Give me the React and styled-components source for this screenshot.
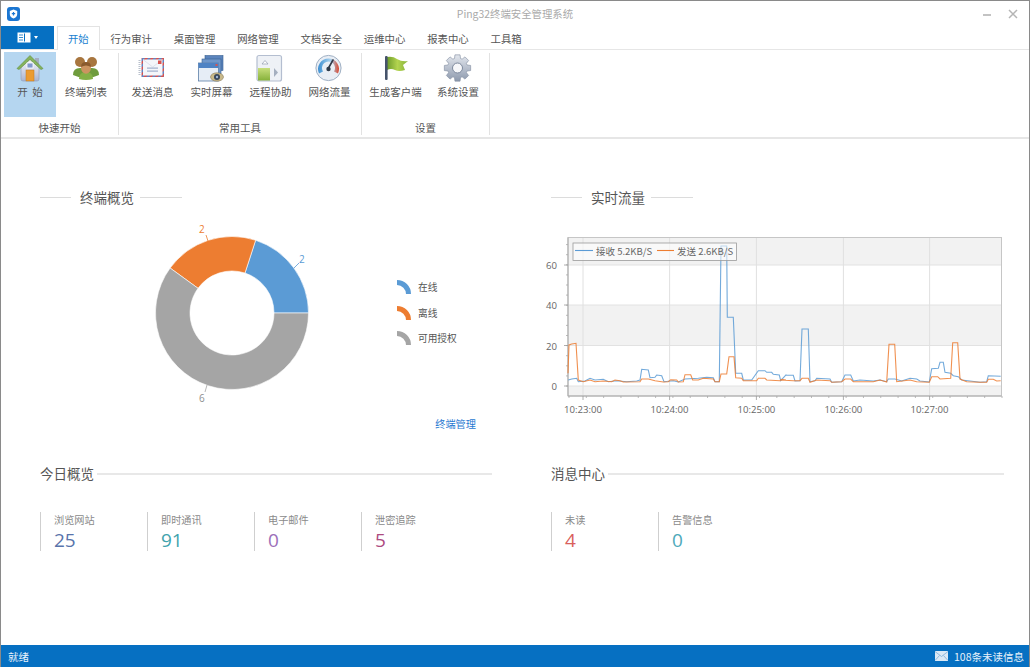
import styled, { createGlobalStyle } from 'styled-components';

const GlobalStyle = createGlobalStyle`
    html, body {
        margin: 0;
        padding: 0;
        background: #fff;
    }
    * {
        box-sizing: border-box;
    }
`

const TABS = ['开始', '行为审计', '桌面管理', '网络管理', '文档安全', '运维中心', '报表中心', '工具箱']

const HomeIcon = () => (
    <svg width="30" height="30" viewBox="0 0 30 30">
        <defs>
            <linearGradient id="wall" x1="0" y1="0" x2="0" y2="1">
                <stop offset="0" stopColor="#f7f8fc" />
                <stop offset="1" stopColor="#a9b4d2" />
            </linearGradient>
        </defs>
        <rect x="20" y="4" width="4" height="8" fill="#a3aec2" />
        <path d="M6 13 L15 5 L24 13 V25 Q24 27 22 27 H8 Q6 27 6 25 Z" fill="url(#wall)" stroke="#8d9cb8" strokeWidth=".6" />
        <path d="M2 14.5 L15 1.5 L28 14.5 L26 15.5 L15 5.5 L4 15.5 Z" fill="#86b35c" stroke="#5d8c3a" strokeWidth=".6" />
        <rect x="12" y="9" width="6" height="5" fill="#8299cd" stroke="#fff" strokeWidth=".8" />
        <rect x="11" y="16" width="8" height="11" fill="#eb9b32" stroke="#c47a1c" strokeWidth=".5" />
    </svg>
)

const UsersIcon = () => (
    <svg width="30" height="30" viewBox="0 0 30 30">
        <circle cx="9" cy="8" r="5" fill="#a8763f" />
        <circle cx="21" cy="8" r="5" fill="#a8763f" />
        <path d="M2 21 Q2 14 9 14 H21 Q28 14 28 21 Q22 24 15 24 Q8 24 2 21 Z" fill="#6f9c3d" />
        <path d="M8 25 Q8 18 15 18 Q22 18 22 25 Q15 27 8 25 Z" fill="#84b045" />
        <ellipse cx="15" cy="14" rx="5" ry="5.8" fill="#cc9460" />
        <path d="M10 13 Q10 8 15 8 Q20 8 20 13 Q15 10 10 13 Z" fill="#8a5a2d" />
    </svg>
)

const MailIcon = () => (
    <svg width="30" height="30" viewBox="0 0 30 30">
        <defs>
            <pattern id="airmail" width="4" height="4" patternUnits="userSpaceOnUse" patternTransform="rotate(45)">
                <rect width="2" height="4" fill="#d9534f" />
                <rect x="2" width="2" height="4" fill="#5d86c7" />
            </pattern>
        </defs>
        <rect x="3.5" y="4" width="22.5" height="19" fill="url(#airmail)" />
        <rect x="5" y="5.5" width="19.5" height="16" fill="#f4f6fa" />
        <path d="M5 5.5 L14.7 13 L24.5 5.5" fill="none" stroke="#d6dce8" strokeWidth=".8" />
        <rect x="20" y="6.5" width="3.5" height="3.5" fill="#d9534f" />
        <rect x="9" y="13.5" width="11" height="1.2" fill="#9fb0cc" />
        <rect x="9" y="16.5" width="11" height="1.2" fill="#9fb0cc" />
        <path d="M1.5 6 V22" stroke="#b8c0cc" strokeWidth="2" strokeDasharray="1 1" />
    </svg>
)

const ScreenIcon = () => (
    <svg width="30" height="30" viewBox="0 0 30 30">
        <rect x="8" y="1.5" width="18" height="15" fill="#5b84bd" stroke="#37608f" strokeWidth=".6" />
        <rect x="5" y="5" width="19" height="15" fill="#6f97cb" stroke="#37608f" strokeWidth=".6" />
        <rect x="1.5" y="9" width="20" height="18" fill="#e6edf6" stroke="#5d7fa8" strokeWidth=".8" />
        <rect x="1.5" y="9" width="20" height="5" fill="#4f83c4" />
        <rect x="18.5" y="10" width="2" height="2" fill="#d9534f" />
        <ellipse cx="20" cy="23" rx="6.5" ry="4.2" fill="#c9b98a" stroke="#76694a" strokeWidth=".5" />
        <circle cx="20" cy="23" r="3" fill="#38465c" />
        <circle cx="20" cy="23" r="1.2" fill="#9fb6d6" />
    </svg>
)

const RemoteIcon = () => (
    <svg width="30" height="30" viewBox="0 0 30 30">
        <defs>
            <linearGradient id="green" x1="0" y1="0" x2="0" y2="1">
                <stop offset="0" stopColor="#c7de7c" />
                <stop offset="1" stopColor="#86b13a" />
            </linearGradient>
        </defs>
        <rect x="1" y="1.5" width="24.5" height="25.5" rx="2" fill="#eef1f6" stroke="#b4bed0" strokeWidth="1.2" />
        <rect x="2" y="14" width="12" height="12.5" fill="url(#green)" />
        <path d="M6 10 L9 6.5 L12 10 Z" fill="#fff" stroke="#8f9bb0" strokeWidth=".7" />
        <path d="M18 14 L22 18.5 L18 23 Z" fill="#a5afbf" />
    </svg>
)

const GaugeIcon = () => (
    <svg width="30" height="30" viewBox="0 0 30 30">
        <defs>
            <linearGradient id="dial" x1="0" y1="0" x2="1" y2="0">
                <stop offset="0" stopColor="#3d8fd1" />
                <stop offset=".6" stopColor="#a9d2ee" />
                <stop offset="1" stopColor="#d9482f" />
            </linearGradient>
        </defs>
        <circle cx="13.5" cy="14" r="12.6" fill="#e9eef5" stroke="#9fb0c4" strokeWidth="1" />
        <path d="M4 19.5 A10.5 10.5 0 1 1 23 19.5 L19 17.5 A6.5 6.5 0 1 0 8 17.5 Z" fill="url(#dial)" />
        <path d="M13.5 14 L18 6" stroke="#2f3a48" strokeWidth="1.6" strokeLinecap="round" />
        <circle cx="13.5" cy="15" r="2.2" fill="#2f3a48" />
    </svg>
)

const FlagIcon = () => (
    <svg width="30" height="30" viewBox="0 0 30 30">
        <defs>
            <linearGradient id="flag" x1="0" y1="0" x2="1" y2="0">
                <stop offset="0" stopColor="#6e9c2c" />
                <stop offset=".5" stopColor="#b3d44f" />
                <stop offset="1" stopColor="#86b23a" />
            </linearGradient>
        </defs>
        <path d="M6 3 Q12 2 16 5 Q21 8 27 7 L22 11 L24 16 Q18 18 14 16 Q10 14 6 16 Z" fill="url(#flag)" />
        <rect x="4" y="2" width="2.6" height="24" rx="1" fill="#46536b" />
    </svg>
)

const toRad = (deg) => (deg * Math.PI) / 180

// eight teeth round the centre, outer and root radius alternate
const gearPath = (cx, cy, outer, root) => {
    const points = []
    for (let i = 0; i < 8; i++) {
        const a = i * 45
        const steps = [[root, a - 22.5 + 5], [outer, a - 11], [outer, a + 11], [root, a + 22.5 - 5]]
        steps.forEach(([r, deg]) => {
            points.push(`${(cx + r * Math.cos(toRad(deg))).toFixed(2)} ${(cy + r * Math.sin(toRad(deg))).toFixed(2)}`)
        })
    }
    return `M${points.join(' L')} Z`
}

const GearIcon = () => (
    <svg width="30" height="30" viewBox="0 0 30 30">
        <defs>
            <linearGradient id="steel" x1="0" y1="0" x2="0" y2="1">
                <stop offset="0" stopColor="#e3e7ee" />
                <stop offset="1" stopColor="#8d99ad" />
            </linearGradient>
        </defs>
        <path d={gearPath(14.5, 14, 13.4, 10)} fill="url(#steel)" stroke="#7d899d" strokeWidth=".6" />
        <circle cx="14.5" cy="14" r="5" fill="#f6f7fa" stroke="#7d899d" strokeWidth="1" />
    </svg>
)

const GROUPS = [
    {
        title: '快速开始',
        tools: [
            { label: '开  始', icon: <HomeIcon />, active: true, width: 52 },
            { label: '终端列表', icon: <UsersIcon />, width: 60 },
        ],
        width: 118,
        pad: 3,
    },
    {
        title: '常用工具',
        tools: [
            { label: '发送消息', icon: <MailIcon />, width: 59 },
            { label: '实时屏幕', icon: <ScreenIcon />, width: 59 },
            { label: '远程协助', icon: <RemoteIcon />, width: 59 },
            { label: '网络流量', icon: <GaugeIcon />, width: 59 },
        ],
        width: 243,
        pad: 4,
    },
    {
        title: '设置',
        tools: [
            { label: '生成客户端', icon: <FlagIcon />, width: 67 },
            { label: '系统设置', icon: <GearIcon />, width: 58 },
        ],
        width: 128,
        pad: 0,
    },
]

// donut slice, angles counted counter-clockwise from east
const slice = (cx, cy, r1, r2, from, to) => {
    const pt = (r, a) => `${(cx + r * Math.cos(toRad(a))).toFixed(2)} ${(cy - r * Math.sin(toRad(a))).toFixed(2)}`
    const large = to - from > 180 ? 1 : 0
    return `M${pt(r2, from)} A${r2} ${r2} 0 ${large} 0 ${pt(r2, to)} L${pt(r1, to)} A${r1} ${r1} 0 ${large} 1 ${pt(r1, from)} Z`
}

const Donut = () => (
    <svg width="200" height="185" viewBox="0 0 200 185" style={{ flex: 'none' }}>
        <path d={slice(92, 93, 42, 76.5, 0, 72)} fill="#5b9bd5" stroke="#fff" strokeWidth=".6" />
        <path d={slice(92, 93, 42, 76.5, 72, 144)} fill="#ed7d31" stroke="#fff" strokeWidth=".6" />
        <path d={slice(92, 93, 42, 76.5, 144, 360)} fill="#a5a5a5" stroke="#fff" strokeWidth=".6" />
        <path d="M154 48 L159 43" stroke="#5b9bd5" strokeWidth=".8" />
        <path d="M68 21 L66 15" stroke="#ed7d31" strokeWidth=".8" />
        <path d="M67 165 L65 172" stroke="#a5a5a5" strokeWidth=".8" />
        <DonutText x="159" y="43" fill="#5b9bd5">2</DonutText>
        <DonutText x="59" y="13" fill="#ed7d31">2</DonutText>
        <DonutText x="59" y="182" fill="#8f8f8f">6</DonutText>
    </svg>
)

const RECEIVE_A = [[85,450],[95,447],[110,445],[115,455],[135,453],[150,445],[165,450],[190,448],[205,455],[230,452],[260,455],[290,453],[300,450],[305,418],[325,420],[330,443],[345,442],[350,435],[365,437],[372,455],[400,452],[415,456],[435,447],[475,445],[500,442],[520,443],[525,455],[538,455],[543,48],[560,48],[562,262],[580,262],[587,430],[605,430],[610,450],[635,450],[655,422],[675,422],[680,427],[695,427],[700,433],[718,435],[722,452],[738,435]]
const RECEIVE_B = [[20,436],[40,436],[45,453],[60,452],[66,297],[85,297],[90,455],[105,452],[110,445],[150,447],[155,457],[185,455],[195,435],[212,435],[220,453],[240,450],[280,453],[300,450],[320,455],[325,447],[345,447],[365,453],[390,445],[410,447],[420,453],[448,456],[455,416],[475,415],[480,397],[490,397],[495,427],[512,430],[520,437],[535,440],[545,450],[570,453],[600,457],[620,455],[625,437],[662,439]]
const SEND_A = [[84,430],[87,345],[95,342],[108,340],[115,450],[130,455],[150,450],[165,455],[190,453],[215,455],[225,450],[240,452],[250,456],[300,455],[305,447],[325,447],[345,452],[370,456],[385,455],[392,449],[410,450],[415,456],[430,455],[435,434],[452,434],[458,450],[475,450],[490,445],[520,447],[525,455],[538,455],[543,432],[560,432],[567,380],[582,380],[587,443],[605,445],[610,452],[650,452],[655,445],[675,445],[680,450],[720,452],[725,448],[738,450]]
const SEND_B = [[0,450],[40,452],[60,452],[66,445],[85,445],[90,457],[110,450],[150,452],[155,457],[185,455],[195,447],[212,447],[220,455],[280,455],[300,450],[320,456],[327,343],[344,343],[350,455],[390,450],[410,455],[448,457],[455,440],[473,440],[480,447],[512,445],[518,338],[533,338],[540,447],[560,455],[600,457],[620,457],[625,448],[640,448],[650,453],[662,452]]

// points were read off two crops, bring them back to chart units
const toPoints = (a, b) =>
    [...a.map(([x, y]) => [x / 3, y / 3]), ...b.map(([x, y]) => [240 + x / 3, y / 3])]
        .map(([x, y]) => `${x.toFixed(1)},${y.toFixed(1)}`)
        .join(' ')

const TIMES = [[43, '10:23:00'], [129.6, '10:24:00'], [216.4, '10:25:00'], [303.4, '10:26:00'], [389.6, '10:27:00']]
const LEVELS = [[156, '0'], [115.5, '20'], [75, '40'], [35, '60']]
const BANDS = [[7.5, 27.5], [75, 40.5], [156, 10]]
const minorX = Array.from({ length: 26 }, (_, i) => 29 + i * 17.32)
const minorY = Array.from({ length: 15 }, (_, i) => 156 - i * 10.1)

const TrafficChart = () => (
    <svg width="470" height="190" viewBox="0 0 470 190" style={{ display: 'block', marginLeft: -11 }}>
        {BANDS.map(([y, h]) => <rect key={y} x="28" y={y} width="433.5" height={h} fill="#f2f2f2" />)}
        {LEVELS.map(([y]) => <path key={y} d={`M28 ${y} H461.5`} stroke="#e2e2e2" strokeWidth="1" />)}
        {TIMES.map(([x]) => <path key={x} d={`M${x} 7.5 V166`} stroke="#e0e0e0" strokeWidth="1" />)}
        <rect x="28" y="7.5" width="433.5" height="158.5" fill="none" stroke="#c6c6c6" strokeWidth="1" />
        <path d="M28 7.5 V166 H461.5" fill="none" stroke="#ababab" strokeWidth="1" />
        {minorX.map((x) => <path key={x} d={`M${x} 166 v2`} stroke="#aaa" strokeWidth=".8" />)}
        {TIMES.map(([x]) => <path key={x} d={`M${x} 166 v4`} stroke="#999" strokeWidth=".8" />)}
        {minorY.map((y) => <path key={y} d={`M28 ${y} h-2`} stroke="#aaa" strokeWidth=".8" />)}
        {LEVELS.map(([y]) => <path key={y} d={`M28 ${y} h-4`} stroke="#999" strokeWidth=".8" />)}
        {LEVELS.map(([y, text]) => <AxisText key={y} x="17" y={y + 4} textAnchor="end">{text}</AxisText>)}
        {TIMES.map(([x, text]) => <AxisText key={x} x={x} y="183" textAnchor="middle">{text}</AxisText>)}
        <polyline points={toPoints(RECEIVE_A, RECEIVE_B)} fill="none" stroke="#5b9bd5" strokeWidth="1.1" strokeOpacity=".85" />
        <polyline points={toPoints(SEND_A, SEND_B)} fill="none" stroke="#ed7d31" strokeWidth="1.1" strokeOpacity=".85" />
        <rect x="33" y="13" width="163.5" height="17.5" fill="#fff" fillOpacity=".55" stroke="#9b9b9b" strokeWidth=".8" />
        <path d="M35 20.5 H53" stroke="#5b9bd5" strokeWidth="1.1" />
        <ChartLegend x="56" y="24.5">接收 5.2KB/S</ChartLegend>
        <path d="M117 20.5 H134" stroke="#ed7d31" strokeWidth="1.1" />
        <ChartLegend x="137" y="24.5">发送 2.6KB/S</ChartLegend>
    </svg>
)

const LegendArc = ({ color }) => (
    <svg width="14" height="14" viewBox="0 0 14 14">
        <path d="M0 0 A14 14 0 0 1 14 14 L9 14 A9 9 0 0 0 0 5 Z" fill={color} />
    </svg>
)

const App = () => (
    <Frame>
        <GlobalStyle />
        <TitleBar>
            <Logo>
                <svg width="13" height="14" viewBox="0 0 13 14">
                    <rect width="13" height="14" rx="3" fill="#1b76d2" />
                    <path d="M6.5 2.6 L10.2 3.9 V7 Q10.2 10 6.5 11.6 Q2.8 10 2.8 7 V3.9 Z" fill="#fff" />
                    <path d="M6.5 5 V8.4 M4.8 6.7 H8.2" stroke="#1b76d2" strokeWidth="1.2" />
                </svg>
            </Logo>
            <WindowTitle>Ping32终端安全管理系统</WindowTitle>
            <WindowControls>
                <svg width="10" height="10" viewBox="0 0 10 10"><path d="M1 6 H9" stroke="#b5b5b5" strokeWidth="1.6" /></svg>
                <svg width="10" height="10" viewBox="0 0 10 10"><path d="M1 1 L9 9 M9 1 L1 9" stroke="#b5b5b5" strokeWidth="1.5" /></svg>
            </WindowControls>
        </TitleBar>

        <TabBar>
            <FileButton>
                <svg width="14" height="11" viewBox="0 0 14 11">
                    <rect x=".5" y=".5" width="13" height="10" fill="#fff" />
                    <rect x="7" y="1.5" width="1" height="8" fill="#0670c2" />
                    <path d="M2 3 H6 M2 5.5 H6 M2 8 H6" stroke="#0670c2" strokeWidth=".8" />
                </svg>
                <Caret />
            </FileButton>
            {TABS.map((tab, i) => <Tab key={tab} $active={i === 0}>{tab}</Tab>)}
        </TabBar>

        <Ribbon>
            {GROUPS.map((group) => (
                <Group key={group.title} $width={group.width}>
                    <Tools $pad={group.pad}>
                        {group.tools.map((tool) => (
                            <Tool key={tool.label} $active={tool.active} $width={tool.width}>
                                {tool.icon}
                                <ToolLabel>{tool.label}</ToolLabel>
                            </Tool>
                        ))}
                    </Tools>
                    <GroupTitle>{group.title}</GroupTitle>
                </Group>
            ))}
        </Ribbon>

        <Content>
            <section>
                <Heading>
                    <HeadingRule $width={31} />
                    <HeadingText>终端概览</HeadingText>
                    <HeadingRule $width={42} />
                </Heading>
                <DonutRow>
                    <Donut />
                    <Legend>
                        <LegendRow><LegendArc color="#5b9bd5" />在线</LegendRow>
                        <LegendRow><LegendArc color="#ed7d31" />离线</LegendRow>
                        <LegendRow><LegendArc color="#a5a5a5" />可用授权</LegendRow>
                    </Legend>
                </DonutRow>
                <ManageLink>终端管理</ManageLink>
            </section>

            <section>
                <Heading>
                    <HeadingRule $width={31} />
                    <HeadingText>实时流量</HeadingText>
                    <HeadingRule $width={42} />
                </Heading>
                <ChartWrap>
                    <TrafficChart />
                </ChartWrap>
            </section>

            <section>
                <Heading>
                    <PlainText>今日概览</PlainText>
                    <HeadingRule $grow />
                </Heading>
                <Stats>
                    <Stat><StatLabel>浏览网站</StatLabel><StatValue $color="#5873ab">25</StatValue></Stat>
                    <Stat><StatLabel>即时通讯</StatLabel><StatValue $color="#3fa3ad">91</StatValue></Stat>
                    <Stat><StatLabel>电子邮件</StatLabel><StatValue $color="#9c6fb9">0</StatValue></Stat>
                    <Stat><StatLabel>泄密追踪</StatLabel><StatValue $color="#ad4a7f">5</StatValue></Stat>
                </Stats>
            </section>

            <section>
                <Heading>
                    <PlainText>消息中心</PlainText>
                    <HeadingRule $grow />
                </Heading>
                <Stats>
                    <Stat><StatLabel>未读</StatLabel><StatValue $color="#d9605c">4</StatValue></Stat>
                    <Stat><StatLabel>告警信息</StatLabel><StatValue $color="#4ea9ba">0</StatValue></Stat>
                </Stats>
            </section>
        </Content>

        <StatusBar>
            <span>就绪</span>
            <StatusInfo>
                <svg width="13" height="10" viewBox="0 0 13 10">
                    <rect width="13" height="10" fill="#dce9f5" />
                    <path d="M0 .5 L6.5 5.5 L13 .5 M0 9.5 L4.5 4.5 M13 9.5 L8.5 4.5" fill="none" stroke="#7eaed8" strokeWidth=".8" />
                </svg>
                108条未读信息
            </StatusInfo>
        </StatusBar>
    </Frame>
)

const Frame = styled.div`
    width: 1030px;
    height: 667px;
    display: flex;
    flex-direction: column;
    border: 1px solid #8a8a8a;
    border-bottom: 0;
    background: #fff;
    font-family: "Noto Sans CJK SC", "Noto Sans", sans-serif;
    color: #555;
    overflow: hidden;
`
const TitleBar = styled.header`
    height: 25px;
    flex: none;
    display: flex;
    align-items: center;
    justify-content: space-between;
    padding: 0 11px 0 6px;
    position: relative;
`
const Logo = styled.div`
    display: flex;
`
const WindowTitle = styled.div`
    position: absolute;
    left: 0;
    right: 0;
    text-align: center;
    font-size: 10.4px;
    color: #a9a9a9;
`
const WindowControls = styled.div`
    display: flex;
    gap: 16px;
    align-items: center;
`
const TabBar = styled.nav`
    height: 23px;
    flex: none;
    display: flex;
    align-items: stretch;
`
const FileButton = styled.div`
    width: 53px;
    margin-right: 3px;
    background: #0670c2;
    display: flex;
    align-items: center;
    justify-content: center;
    gap: 3px;
`
const Caret = styled.i`
    width: 0;
    height: 0;
    border-left: 2.5px solid transparent;
    border-right: 2.5px solid transparent;
    border-top: 3px solid #fff;
`
const Tab = styled.div`
    padding: 0 9.9px;
    display: flex;
    align-items: center;
    font-size: 10.4px;
    color: ${(p) => (p.$active ? '#1a7fd0' : '#555')};
    background: #fff;
    border: 1px solid ${(p) => (p.$active ? '#e3e3e3' : 'transparent')};
    border-bottom: 0;
    position: relative;
    margin-bottom: ${(p) => (p.$active ? '-1px' : '0')};
    z-index: 1;
`
const Ribbon = styled.div`
    height: 90px;
    flex: none;
    display: flex;
    border-top: 1px solid #e6e6e6;
    border-bottom: 2px solid #e6e6e6;
    padding-top: 2px;
`
const Group = styled.div`
    width: ${(p) => p.$width}px;
    height: 82px;
    margin-top: 1px;
    flex: none;
    display: flex;
    flex-direction: column;
    align-items: center;
    border-right: 1px solid #e2e2e2;
`
const Tools = styled.div`
    display: flex;
    height: 65px;
    margin-top: -1px;
    align-self: stretch;
    padding-left: ${(p) => p.$pad}px;
`
const Tool = styled.div`
    width: ${(p) => p.$width}px;
    flex: none;
    display: flex;
    flex-direction: column;
    align-items: center;
    padding-top: 2px;
    gap: 1px;
    background: ${(p) => (p.$active ? '#b5d6f0' : 'transparent')};
`
const ToolLabel = styled.span`
    font-size: 10.5px;
    line-height: 14px;
    white-space: pre;
    color: #555;
`
const GroupTitle = styled.div`
    font-size: 10.5px;
    line-height: 14px;
    margin-top: 4px;
    color: #555;
`
const Content = styled.main`
    flex: 1;
    display: grid;
    grid-template-columns: 452px 453px;
    column-gap: 59px;
    grid-template-rows: auto auto;
    row-gap: 34px;
    align-content: start;
    padding: 50px 0 0 39px;
`
const Heading = styled.div`
    display: flex;
    align-items: center;
    height: 17px;
`
const HeadingRule = styled.i`
    display: block;
    height: ${(p) => (p.$grow ? 2 : 1)}px;
    background: ${(p) => (p.$grow ? '#e8e8e8' : '#dcdcdc')};
    ${(p) => (p.$grow ? 'flex: 1;' : `width: ${p.$width}px;`)}
`
const HeadingText = styled.h3`
    margin: 0 6px 0 9px;
    font-size: 13.5px;
    font-weight: 400;
    line-height: 17px;
    color: #555;
`
const PlainText = styled(HeadingText)`
    margin: 0 3px 0 0;
`
const DonutRow = styled.div`
    display: flex;
    align-items: flex-start;
    margin-top: 14px;
    padding-left: 100px;
`
const Legend = styled.div`
    display: flex;
    flex-direction: column;
    gap: 11.5px;
    margin: 60px 0 0 57px;
`
const LegendRow = styled.div`
    display: flex;
    align-items: center;
    gap: 7px;
    height: 14px;
    font-size: 9.7px;
    color: #555;
`
const ManageLink = styled.a`
    display: block;
    margin-top: 12px;
    padding-right: 16px;
    text-align: right;
    font-size: 10.2px;
    line-height: 14px;
    color: #1f78d1;
`
const ChartWrap = styled.div`
    margin-top: 24px;
`
const ChartLegend = styled.text`
    font-size: 9.5px;
    fill: #666;
`
const AxisText = styled.text`
    font-family: "Open Sans", sans-serif;
    font-size: 9.6px;
    fill: #666;
`
const DonutText = styled.text`
    font-family: "Open Sans", sans-serif;
    font-size: 10px;
`
const Stats = styled.div`
    display: flex;
    margin-top: 30px;
`
const Stat = styled.div`
    width: 107px;
    height: 39px;
    padding-left: 13px;
    border-left: 1px solid #cfcfcf;
    display: flex;
    flex-direction: column;
`
const StatLabel = styled.span`
    font-size: 10.2px;
    line-height: 15px;
    color: #8a8a8a;
`
const StatValue = styled.span`
    font-family: "Open Sans", sans-serif;
    font-size: 19px;
    line-height: 21px;
    margin-top: 3px;
    color: ${(p) => p.$color};
`
const StatusBar = styled.footer`
    height: 22px;
    flex: none;
    margin: 0 -1px;
    padding: 0 6px 0 8px;
    display: flex;
    align-items: center;
    justify-content: space-between;
    background: #0670c2;
    color: #e8f2fb;
    font-size: 10.5px;
`
const StatusInfo = styled.div`
    display: flex;
    align-items: center;
    gap: 6px;
`

export default App
